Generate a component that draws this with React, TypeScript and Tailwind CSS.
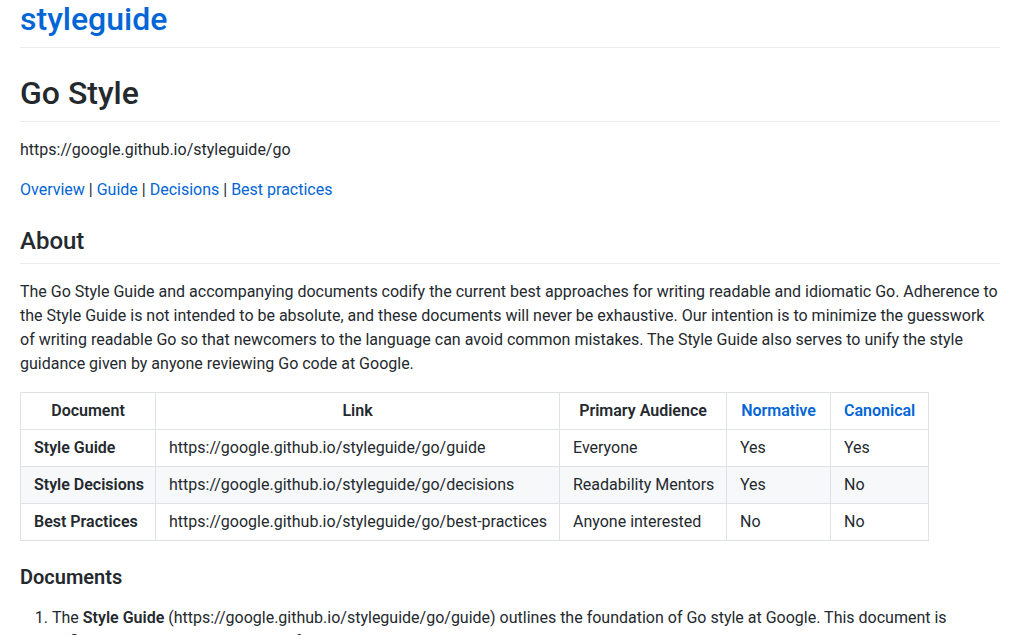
const rows = [
  { doc: 'Style Guide', link: 'https://google.github.io/styleguide/go/guide', audience: 'Everyone', normative: 'Yes', canonical: 'Yes' },
  { doc: 'Style Decisions', link: 'https://google.github.io/styleguide/go/decisions', audience: 'Readability Mentors', normative: 'Yes', canonical: 'No' },
  { doc: 'Best Practices', link: 'https://google.github.io/styleguide/go/best-practices', audience: 'Anyone interested', normative: 'No', canonical: 'No' },
]

export default function App() {
  return (
    <div className="bg-white text-[#24292e] text-[16px] leading-6 pl-5 pr-[13px] w-full" style={{ fontFamily: 'Roboto, sans-serif' }}>
      {/* Site title */}
      <h1 className="mt-[-1px] mb-6 pb-[7.6px] border-b border-[#eaecef] text-[32px] leading-[1.25] font-medium">
        <a href="#" className="text-[#0366d6]">styleguide</a>
      </h1>

      <h1 className="mb-4 pt-[1px] pb-[8.6px] border-b border-[#eaecef] text-[32px] leading-[1.25] font-medium">Go Style</h1>

      <p className="mb-4">https://google.github.io/styleguide/go</p>

      <p className="mb-6">
        <a href="#" className="text-[#0366d6]">Overview</a> | <a href="#" className="text-[#0366d6]">Guide</a> |{' '}
        <a href="#" className="text-[#0366d6]">Decisions</a> | <a href="#" className="text-[#0366d6]">Best practices</a>
      </p>

      <h2 className="mb-4 pb-[7.2px] border-b border-[#eaecef] text-[24px] leading-[1.25] font-medium">About</h2>

      <p className="mb-4">
        The Go Style Guide and accompanying documents codify the current best approaches for writing readable and
        idiomatic Go. Adherence to the Style Guide is not intended to be absolute, and these documents will never be
        exhaustive. Our intention is to minimize the guesswork of writing readable Go so that newcomers to the language
        can avoid common mistakes. The Style Guide also serves to unify the style guidance given by anyone reviewing Go
        code at Google.
      </p>

      {/* Documents table */}
      <table className="mb-6 border-collapse table-fixed w-[908px]">
        <colgroup>
          <col className="w-[135px]" />
          <col className="w-[404px]" />
          <col className="w-[167px]" />
          <col className="w-[104px]" />
          <col className="w-[98px]" />
        </colgroup>
        <thead>
          <tr>
            <th className="border border-[#dfe2e5] px-[13px] py-[6px] font-semibold text-center">Document</th>
            <th className="border border-[#dfe2e5] px-[13px] py-[6px] font-semibold text-center">Link</th>
            <th className="border border-[#dfe2e5] px-[13px] py-[6px] font-semibold text-center">Primary Audience</th>
            <th className="border border-[#dfe2e5] px-[13px] py-[6px] font-semibold text-center">
              <a href="#" className="text-[#0366d6]">Normative</a>
            </th>
            <th className="border border-[#dfe2e5] px-[13px] py-[6px] font-semibold text-center">
              <a href="#" className="text-[#0366d6]">Canonical</a>
            </th>
          </tr>
        </thead>
        <tbody>
          {rows.map((r, i) => (
            <tr key={r.doc} className={i === 1 ? 'bg-[#f6f8fa]' : 'bg-white'}>
              <td className="border border-[#dfe2e5] px-[13px] py-[6px] font-semibold whitespace-nowrap">{r.doc}</td>
              <td className="border border-[#dfe2e5] px-[13px] py-[6px] whitespace-nowrap">{r.link}</td>
              <td className="border border-[#dfe2e5] px-[13px] py-[6px] whitespace-nowrap">{r.audience}</td>
              <td className="border border-[#dfe2e5] px-[13px] py-[6px]">{r.normative}</td>
              <td className="border border-[#dfe2e5] px-[13px] py-[6px]">{r.canonical}</td>
            </tr>
          ))}
        </tbody>
      </table>

      <h3 className="mb-4 text-[20px] leading-[1.25] font-semibold">Documents</h3>

      <ol className="list-decimal pl-8 mb-4">
        <li>
          The <strong className="font-semibold">Style Guide</strong> (https://google.github.io/styleguide/go/guide)
          outlines the foundation of Go style at Google. This document is definitive and is used as the basis for the
          recommendations in Style Decisions and Best Practices.
        </li>
      </ol>
    </div>
  )
}
